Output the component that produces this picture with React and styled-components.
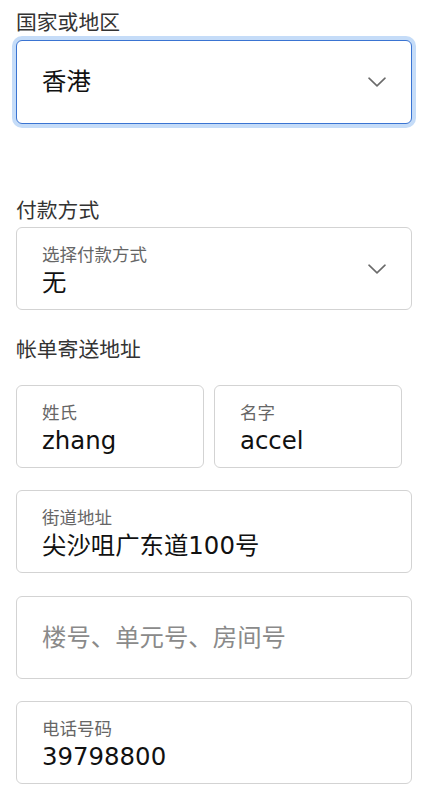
import React from "react";
import styled, { createGlobalStyle } from "styled-components";

const Global = createGlobalStyle`
  html, body { margin: 0; padding: 0; background: #fff; }
  body { font-family: "Noto Sans CJK SC", sans-serif; -webkit-font-smoothing: antialiased; }
  * { box-sizing: border-box; }
`;

const Page = styled.div`
  width: 424px;
  padding: 8px 12px 0 16px;
  display: flex;
  flex-direction: column;
`;

const Heading = styled.div`
  font-family: "Noto Sans CJK SC", sans-serif;
  font-size: 20.8px;
  line-height: 26px;
  color: #333;
  margin-top: ${(p) => p.$mt || 0}px;
`;

const Field = styled.div`
  height: ${(p) => (p.$tall ? 84 : 83)}px;
  border: 1px solid ${(p) => (p.$focus ? "#3a74d2" : "#d3d3d3")};
  border-radius: 6px;
  box-shadow: ${(p) => (p.$focus ? "0 0 0 4px #c5dcf8" : "none")};
  background: #fff;
  display: flex;
  align-items: center;
  padding: 0 25px;
  margin-top: ${(p) => p.$mt || 0}px;
`;

const FieldBody = styled.div`
  flex: 1;
  display: flex;
  flex-direction: column;
  align-self: ${(p) => (p.$stack ? "flex-start" : "center")};
  padding-top: ${(p) => (p.$stack ? 15 : 0)}px;
`;

const Label = styled.div`
  font-family: "Noto Sans CJK SC", sans-serif;
  font-size: 17.5px;
  line-height: 22px;
  color: #666;
`;

const Value = styled.div`
  font-family: "DejaVu Sans", "Noto Sans CJK SC", sans-serif;
  font-size: 24.4px;
  line-height: 30px;
  color: ${(p) => (p.$placeholder ? "#8a8a8a" : "#111")};
  margin-top: ${(p) => (p.$stack ? 3 : 0)}px;
  white-space: nowrap;
`;

const Row = styled.div`
  display: grid;
  grid-template-columns: 188px 188px;
  gap: 10px;
  margin-top: ${(p) => p.$mt || 0}px;
`;

const Chevron = () => (
  <svg width="18" height="10" viewBox="0 0 18 10" fill="none" style={{ flexShrink: 0 }}>
    <path d="M1 1.2 L9 8.8 L17 1.2" stroke="#6a6a6a" strokeWidth="1.6" strokeLinecap="round" strokeLinejoin="round" />
  </svg>
);

const StackedField = ({ label, value, mt }) => (
  <Field $mt={mt}>
    <FieldBody $stack>
      <Label>{label}</Label>
      <Value $stack>{value}</Value>
    </FieldBody>
  </Field>
);

export default function App() {
  return (
    <>
      <Global />
      <Page>
        <Heading>国家或地区</Heading>
        <Field $focus $tall $mt={6}>
          <FieldBody>
            <Value>香港</Value>
          </FieldBody>
          <Chevron />
        </Field>

        <Heading $mt={72}>付款方式</Heading>
        <Field $mt={5}>
          <FieldBody $stack>
            <Label>选择付款方式</Label>
            <Value $stack>无</Value>
          </FieldBody>
          <Chevron />
        </Field>

        <Heading $mt={25}>帐单寄送地址</Heading>
        <Row $mt={24}>
          <StackedField label="姓氏" value="zhang" />
          <StackedField label="名字" value="accel" />
        </Row>
        <StackedField label="街道地址" value="尖沙咀广东道100号" mt={22} />
        <Field $mt={23}>
          <FieldBody>
            <Value $placeholder>楼号、单元号、房间号</Value>
          </FieldBody>
        </Field>
        <StackedField label="电话号码" value="39798800" mt={22} />
      </Page>
    </>
  );
}
